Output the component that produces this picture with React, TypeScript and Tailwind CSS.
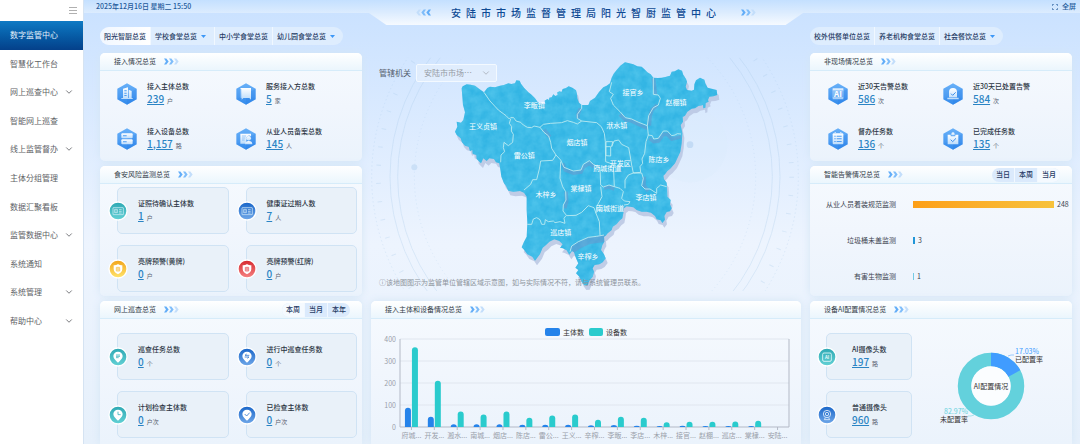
import React from "react";
import { ChevronDown } from "lucide-react";

type Stat = { label: string; value: string; unit: string; icon: React.ReactNode };

const menu: { text: string; more?: boolean; active?: boolean }[] = [
  { text: "数字监管中心", active: true },
  { text: "智慧化工作台" },
  { text: "网上巡查中心", more: true },
  { text: "智能网上巡查" },
  { text: "线上监管督办", more: true },
  { text: "主体分组管理" },
  { text: "数据汇聚看板" },
  { text: "监管数据中心", more: true },
  { text: "系统通知" },
  { text: "系统管理", more: true },
  { text: "帮助中心", more: true },
];

function Arrows({ flip = false }: { flip?: boolean }) {
  return (
    <svg viewBox="0 0 45 20" className={flip ? "h-[7px] w-[15px] rotate-180" : "h-[7px] w-[15px]"} aria-hidden="true">
      <path d="M0 1h7l7 9-7 9H0l6-9z" fill="#62adf8" />
      <path d="M15 1h7l7 9-7 9h-7l6-9z" fill="#7fbdfa" />
      <path d="M30 1h7l7 9-7 9h-7l6-9z" fill="#c3defb" />
    </svg>
  );
}

function Pills({ items }: { items: { text: string; more?: boolean; active?: boolean }[] }) {
  return (
    <nav className="flex h-[18px] w-fit shrink-0 divide-x divide-[#f1f8ff] overflow-hidden rounded-full bg-[#deedfe]">
      {items.map((i) => (
        <button
          key={i.text}
          type="button"
          className={
            "flex items-center gap-1 whitespace-nowrap px-1 text-[7px] font-medium text-[#1f3a63] " +
            (i.active ? "bg-gradient-to-r from-[#f1f7ff] to-white" : "")
          }
        >
          {i.text}
          {i.more && (
            <svg viewBox="0 0 10 6" className="mr-1 h-[3px] w-[5px] shrink-0" aria-hidden="true">
              <path d="M0 0h10L5 6z" fill="#3d98f7" />
            </svg>
          )}
        </button>
      ))}
    </nav>
  );
}

function Segments({ items, active }: { items: string[]; active: number }) {
  return (
    <div className="ml-auto flex h-[14px] divide-x divide-[#f1f8ff] overflow-hidden rounded-full bg-[#dbeafc]">
      {items.map((t, n) => (
        <button
          key={t}
          type="button"
          className={"flex items-center px-1 text-[7px] font-medium text-[#1f3a63] " + (n === active ? "bg-[#f5faff]" : "")}
        >
          {t}
        </button>
      ))}
    </div>
  );
}

function Panel({
  title,
  extra,
  className = "",
  children,
}: {
  title: string;
  extra?: React.ReactNode;
  className?: string;
  children: React.ReactNode;
}) {
  return (
    <section
      className={
        "flex flex-col overflow-hidden bg-gradient-to-b from-[#f6fafe] via-[#f1f6fd] to-[#ebf3fc] shadow-[0_0_8px_#d3e5f5] " + className
      }
    >
      <header className="flex h-[18px] shrink-0 items-center gap-2 border-b border-[#d6ecfa] bg-gradient-to-b from-white to-[#ebf6fd] pl-[14px] pr-3">
        <h2 className="text-[7px] text-[#333c48]">{title}</h2>
        <Arrows />
        {extra}
      </header>
      {children}
    </section>
  );
}

function Value({ label, value, unit }: Omit<Stat, "icon">) {
  return (
    <div>
      <div className="whitespace-nowrap text-[7px] font-medium leading-[12px] text-[#2b3543]">{label}</div>
      <div className="flex items-baseline gap-[3px] leading-[14px]">
        <a href="#" className="text-[10px] font-medium text-[#2b84c4] underline underline-offset-1">
          {value}
        </a>
        <span className="text-[6px] text-[#596270]">{unit}</span>
      </div>
    </div>
  );
}

function Hex({ children }: { children: React.ReactNode }) {
  return (
    <svg viewBox="0 0 60 66" className="h-[22px] w-5 shrink-0" aria-hidden="true">
      <defs>
        <linearGradient id="hexFill" x1="0" y1="0" x2="0" y2="1">
          <stop offset="0" stopColor="#68b0f8" />
          <stop offset="1" stopColor="#3a8fee" />
        </linearGradient>
        <linearGradient id="glyphFill" x1="0" y1="0" x2="0" y2="1">
          <stop offset="0" stopColor="#ffffff" />
          <stop offset="1" stopColor="#bcdcfb" />
        </linearGradient>
      </defs>
      <path d="M30 1 59 17v32L30 65 1 49V17z" fill="url(#hexFill)" />
      <path d="M30 33 59 17v32L30 65z" fill="#1f78e2" opacity=".22" />
      <path d="M30 33 1 49l29 16 29-16z" fill="#2b82ea" opacity=".22" />
      <g fill="url(#glyphFill)">{children}</g>
    </svg>
  );
}

const accessStats: Stat[] = [
  {
    label: "接入主体总数",
    value: "239",
    unit: "户",
    icon: (
      <Hex>
        <path d="M18 17l15-4v34H18zM35 20l9 4v23h-9zM13 45h34v3H13z" />
        <path d="M22 22h7v3h-7zM22 29h7v3h-7zM22 36h7v3h-7z" fill="#4d9df2" />
      </Hex>
    ),
  },
  {
    label: "服务接入方总数",
    value: "5",
    unit: "家",
    icon: (
      <Hex>
        <path d="M14 15h31v3H14zM17 18h28v32l-5-5H22l-5 5z" />
        <path d="M14 15h5v30h-5z" opacity=".7" />
      </Hex>
    ),
  },
  {
    label: "接入设备总数",
    value: "1,157",
    unit: "路",
    icon: (
      <Hex>
        <rect x="13" y="16" width="34" height="15" rx="3" />
        <rect x="13" y="34" width="34" height="15" rx="3" />
        <path d="M18 22h11v3H18zM18 40h11v3H18z" fill="#4d9df2" />
      </Hex>
    ),
  },
  {
    label: "从业人员备案总数",
    value: "145",
    unit: "人",
    icon: (
      <Hex>
        <path d="M13 17h32v8a8 8 0 0 0-13 9l-3 13H13z" />
        <circle cx="38" cy="31" r="7" />
        <path d="M27 49c0-7 4-10 11-10s11 3 11 10z" />
        <path d="M18 23h12v2H18zM18 29h10v2H18zM18 35h8v2h-8z" fill="#4d9df2" />
      </Hex>
    ),
  },
];

const offsiteStats: Stat[] = [
  {
    label: "近30天告警总数",
    value: "586",
    unit: "次",
    icon: (
      <Hex>
        <path d="M14 16h32v6H14zM14 43h32v6H14z" opacity=".8" />
        <rect x="13" y="20" width="34" height="25" opacity=".35" />
        <text x="30" y="42" textAnchor="middle" fontSize="24" fontWeight="700" fill="#fff">
          AI
        </text>
      </Hex>
    ),
  },
  {
    label: "近30天已处置告警",
    value: "584",
    unit: "次",
    icon: (
      <Hex>
        <path d="M18 43V27a12 12 0 0 1 24 0v16zM13 44h34v5H13z" />
        <path d="M24 32l5 5 9-9" fill="none" stroke="#3d8fec" strokeWidth="3" />
      </Hex>
    ),
  },
  {
    label: "督办任务数",
    value: "136",
    unit: "个",
    icon: (
      <Hex>
        <rect x="14" y="16" width="32" height="33" rx="3" />
        <path d="M19 23h4v3h-4zM26 23h15v3H26zM19 31h4v3h-4zM26 31h15v3H26zM19 39h4v3h-4zM26 39h15v3H26z" fill="#4d9df2" />
        <path d="M20 12h3v6h-3zM37 12h3v6h-3z" />
      </Hex>
    ),
  },
  {
    label: "已完成任务数",
    value: "135",
    unit: "个",
    icon: (
      <Hex>
        <path d="M14 20h9v5h14v-5h9v29H14z" />
        <path d="M25 22v-4a5 5 0 0 1 10 0v4z" />
        <path d="M23 35l6 6 10-10" fill="none" stroke="#3d8fec" strokeWidth="3" />
      </Hex>
    ),
  },
];

const badgeColors = {
  teal: ["#2fa9b4", "#62d0d4"],
  blue: ["#1b67c9", "#6ea6e8"],
  amber: ["#f2a51c", "#ffe36a"],
  red: ["#d62a30", "#f58080"],
};

function Badge({ tone, children }: { tone: keyof typeof badgeColors; children: React.ReactNode }) {
  const [from, to] = badgeColors[tone];
  return (
    <svg viewBox="0 0 60 60" className="size-5" aria-hidden="true">
      <defs>
        <linearGradient id={"badge-" + tone} x1="0" y1="0" x2="0" y2="1">
          <stop offset="0" stopColor={from} />
          <stop offset="1" stopColor={to} />
        </linearGradient>
      </defs>
      <circle cx="30" cy="30" r="29" fill="#fff" />
      <circle cx="30" cy="30" r="25" fill={"url(#badge-" + tone + ")"} />
      {children}
    </svg>
  );
}

const IdCard = () => (
  <g fill="none" stroke="#dff3fa" strokeWidth="2">
    <rect x="15" y="20" width="31" height="21" rx="1" />
    <path d="M20 25h8v10h-8zM33 26h8M33 31h8M33 36h8M24 28v4" />
  </g>
);
const Shield = ({ color }: { color: string }) => (
  <g>
    <path d="M30 15c4 3 9 4 13 4v11c0 8-6 12-13 16-7-4-13-8-13-16V19c4 0 9-1 13-4z" fill="#fff" />
    <path d="M25 25h10v11H25zM25 30h10M30 25v11" fill="none" stroke={color} strokeWidth="2" />
  </g>
);
const Pin = ({ color, d }: { color: string; d: string }) => (
  <g>
    <path d="M30 14c8 0 14 6 14 13 0 8-8 14-14 20-6-6-14-12-14-20 0-7 6-13 14-13z" fill="#fff" />
    <path d={d} fill="none" stroke={color} strokeWidth="2.5" />
  </g>
);

function Card({ label, value, unit, icon, pad = "pl-5" }: Stat & { pad?: string }) {
  return (
    <div className={"relative flex h-[47px] rounded-[5px] border border-[#d0e3f4] bg-[#e9f1f9] pt-[9px] " + pad}>
      <div className="absolute -left-[10px] top-[13px]">{icon}</div>
      <Value label={label} value={value} unit={unit} />
    </div>
  );
}

const riskCards: Stat[] = [
  { label: "证照待确认主体数", value: "1", unit: "户", icon: <Badge tone="teal"><IdCard /></Badge> },
  { label: "健康证过期人数", value: "7", unit: "人", icon: <Badge tone="blue"><IdCard /></Badge> },
  { label: "亮牌预警(黄牌)", value: "0", unit: "户", icon: <Badge tone="amber"><Shield color="#f5bb3a" /></Badge> },
  { label: "亮牌预警(红牌)", value: "0", unit: "户", icon: <Badge tone="red"><Shield color="#e24a4e" /></Badge> },
];

const patrolCards: Stat[] = [
  { label: "巡查任务总数", value: "0", unit: "个", icon: <Badge tone="teal"><Pin color="#3db5be" d="M24 24h12M24 28h12M24 32h8" /></Badge> },
  { label: "进行中巡查任务数", value: "0", unit: "个", icon: <Badge tone="blue"><Pin color="#3579d0" d="M37 25H24l5-4M23 30h13l-5 4" /></Badge> },
  { label: "计划检查主体数", value: "0", unit: "户次", icon: <Badge tone="teal"><Pin color="#3db5be" d="M30 20v9h8" /></Badge> },
  { label: "已检查主体数", value: "0", unit: "户次", icon: <Badge tone="blue"><Pin color="#3579d0" d="M23 27l6 6 9-10" /></Badge> },
];

const cameraCards: Stat[] = [
  {
    label: "AI摄像头数",
    value: "197",
    unit: "路",
    icon: (
      <Badge tone="teal">
        <rect x="17" y="18" width="26" height="25" rx="4" fill="none" stroke="#e5f9fa" strokeWidth="2.5" />
        <text x="30" y="35" textAnchor="middle" fontSize="13" fontWeight="700" fill="#e5f9fa">
          AI
        </text>
      </Badge>
    ),
  },
  {
    label: "普通摄像头",
    value: "960",
    unit: "路",
    icon: (
      <Badge tone="blue">
        <g fill="none" stroke="#e6f1fd" strokeWidth="2.5">
          <circle cx="30" cy="27" r="11" />
          <circle cx="30" cy="27" r="5" />
          <path d="M25 38l-3 6h16l-3-6" />
        </g>
      </Badge>
    ),
  },
];

const outline =
  "M65 100 68 94 80 88 92 89 105 92 118 102 132 112 142 99 150 95 165 97 180 92 192 90 205 85 214 87 225 85 229 76 239 77 243 86 252 98 265 112 273 118 285 130 293 141 303 146 316 147 314 137 322 132 327 135 328 128 335 127 340 118 346 123 353 120 352 112 360 109 364 112 368 102 378 99 386 94 397 98 408 106 411 118 412 130 417 143 425 150 445 150 450 138 465 128 477 111 490 97 500 92 510 85 515 68 521 56 530 45 541 32 555 22 568 25 580 28 592 34 605 35 615 44 622 52 632 58 640 68 654 69 665 68 676 66 690 62 695 50 704 49 715 43 726 47 730 60 738 72 741 80 737 95 741 105 755 107 762 104 763 88 768 76 780 68 793 74 797 88 803 98 818 102 830 105 832 120 820 124 808 125 804 135 806 140 797 144 796 158 790 160 789 150 775 153 765 160 755 161 742 170 735 182 728 186 729 200 722 210 727 235 725 265 721 290 712 310 705 325 692 340 682 348 675 358 670 362 672 373 680 383 681 395 682 425 692 435 690 448 695 460 690 469 680 471 673 483 675 494 667 504 662 496 650 493 645 483 633 473 620 470 605 470 590 465 580 457 570 455 560 454 552 460 550 475 547 490 538 497 530 507 518 515 515 525 503 535 497 542 492 545 493 560 487 570 483 585 492 598 497 610 488 622 478 628 464 630 458 640 462 650 458 665 449 676 443 690 433 691 425 680 418 665 408 655 415 645 406 638 415 625 408 610 402 592 396 588 388 599 380 586 368 580 360 578 368 568 358 558 343 553 328 560 318 570 308 578 300 597 285 617 277 605 262 598 252 584 245 577 252 560 260 545 262 505 260 465 260 425 252 413 240 408 220 410 205 407 198 392 192 385 184 365 182 350 178 325 168 322 162 312 148 310 140 318 130 310 123 325 116 318 110 312 109 300 98 296 97 285 90 288 86 275 75 272 66 262 62 250 50 240 45 230 52 215 50 200 63 203 70 195 75 172 69 150 67 125Z";

const borders = [
  "M132 112 150 138 175 165 198 182 208 192 212 188 221 188 228 198 242 202 250 210 262 217 275 218 282 213 300 217 310 208 332 205 365 203 382 197 400 202 412 207 425 198",
  "M212 192 208 205 215 215 214 228 220 238 218 262 205 272 192 262 190 278 194 290 183 300 182 322",
  "M300 217 312 232 326 243 332 262 335 280 348 300 338 316 302 318 298 342 290 374 278 374 272 388 252 405",
  "M425 150 425 160 412 178 412 190 425 198 470 203 484 215 493 235 496 260 497 320",
  "M515 82 508 110 520 118 512 130 520 150 540 170 556 188 575 192 596 202 622 212",
  "M640 68 640 118 655 120 661 130 655 150 640 158 626 182 622 212 625 240",
  "M625 240 637 242 641 252 655 250 670 228 682 228 695 242 705 240 712 236 723 237",
  "M625 240 618 260 614 295 606 312 608 325 600 335 602 352 580 354 575 330 570 300 566 278 545 268 536 255 522 258 515 275 518 260 498 260 498 302 512 303 512 275 498 275",
  "M497 320 520 328 523 395 540 400 550 410 545 430 553 438 570 440 565 448 552 450",
  "M348 300 362 315 372 337 400 348 423 345 430 328 448 317 460 328 480 338 482 390 490 396 507 390 523 395",
  "M362 320 360 370 368 395 377 410 378 435 370 450 369 468 380 482 408 481 425 472 445 452 462 458 468 475 478 500 480 540",
  "M482 395 486 425 470 455 468 475",
  "M555 400 555 375 565 360 580 354 605 354 610 370 605 392 615 402 630 402 650 415 650 400 662 390 680 395",
  "M262 508 275 508 280 492 290 488 300 494 305 508 314 508 316 494 325 500 340 498 345 503 360 500 375 505 372 490 378 482",
  "M390 590 395 573 415 560 445 547 470 544 492 540",
];

const towns: [string, number, number][] = [
  ["接官乡", 804, 149], ["赵棚镇", 933, 181], ["李畈镇", 508, 188], ["王义贞镇", 354, 251], ["洑水镇", 755, 249],
  ["烟店镇", 636, 301], ["雷公镇", 478, 340], ["开发区", 766, 362], ["府城街道", 727, 378], ["陈店乡", 882, 351],
  ["棠棣镇", 648, 437], ["木梓乡", 543, 455], ["李店镇", 843, 464], ["南城街道", 735, 497], ["巡店镇", 587, 569],
  ["辛榨乡", 669, 642],
];

function RegionMap() {
  return (
    <svg viewBox="18 -96 1290 849" className="absolute inset-0 size-full" role="img" aria-label="辖区地图">
      <defs>
        <filter id="terrain" x="0" y="0" width="1" height="1">
          <feTurbulence type="fractalNoise" baseFrequency="0.04" numOctaves="3" seed="4" />
          <feColorMatrix values="0 0 0 0 0.12  0 0 0 0 0.62  0 0 0 0 0.88  0.9 0 0 0 -0.2" />
          <feComposite in2="SourceGraphic" operator="in" />
        </filter>
        <clipPath id="ringClip">
          <rect x="18" y="38" width="1290" height="700" />
        </clipPath>
        <clipPath id="landClip">
          <path d={outline} />
        </clipPath>
      </defs>
      <g clipPath="url(#ringClip)" fill="none" stroke="#a9cbe9" strokeWidth="3" opacity=".3">
        <circle cx="660" cy="395" r="585" />
        <circle cx="660" cy="395" r="562" />
        <circle cx="660" cy="395" r="512" strokeDasharray="3 9" />
        <circle cx="660" cy="395" r="640" strokeDasharray="4 8" />
        <circle cx="660" cy="395" r="620" strokeWidth="14" strokeDasharray="3 52" />
      </g>
      <circle cx="975" cy="300" r="112" fill="#dcebfb" opacity=".3" />
      <circle cx="148" cy="367" r="9" fill="#cbe0f7" />
      <circle cx="975" cy="299" r="10" fill="#c3dbf5" />
      <g transform="translate(225 30)">
        <path d={outline} fill="#b9c5e2" transform="translate(6 14)" opacity=".85" />
        <path d={outline} fill="#33b5e4" />
        <path d={outline} fill="#fff" filter="url(#terrain)" />
        <g clipPath="url(#landClip)" fill="none" stroke="#7391c8" strokeWidth="11" opacity=".45">
          <path d="M540 178 556 194 575 198 596 208 622 220M640 70 646 118M652 150 636 164 630 184 628 212M628 250 641 260 655 258 670 238 682 238 695 252 723 245" />
          <path d="M368 325 376 345 400 354 423 351 430 336 448 325 462 336M312 224 330 246M421 160 414 178 414 190M492 400 507 396 523 402M612 365 612 392 625 408M378 410 380 440 374 460" />
          <path d="M395 586 415 572 445 558 470 554 496 550" strokeWidth="20" />
        </g>
        <g fill="none" stroke="#c4eef2" strokeWidth="2.5" strokeLinejoin="round">
          {borders.map((d) => (
            <path key={d} d={d} />
          ))}
        </g>
      </g>
      <g fill="#fff" fontSize="21" textAnchor="middle">
        {towns.map(([name, x, y]) => (
          <text key={name} x={x} y={y}>
            {name}
          </text>
        ))}
      </g>
    </svg>
  );
}

const chart: [string, number, number][] = [
  ["府城...", 87, 363], ["开发...", 47, 210], ["溵水...", 13, 70], ["南城...", 13, 57], ["烟店...", 13, 70], ["陈店...", 10, 42],
  ["雷公...", 10, 52], ["王义...", 10, 57], ["辛榨...", 8, 33], ["李畈...", 9, 47], ["李店...", 6, 42], ["木梓...", 5, 22],
  ["接官...", 6, 24], ["赵棚...", 4, 24], ["巡店...", 5, 25], ["棠棣...", 5, 28], ["安陆...", 0, 0],
];

function bar(x: number, value: number) {
  const h = (value / 400) * 88;
  const r = Math.min(3, h);
  return `M${x} 108v${-(h - r)}a3 ${r} 0 0 1 6 0v${h - r}z`;
}

function BarChart() {
  const step = 389 / chart.length;
  return (
    <svg viewBox="0 0 430 125" className="w-full" role="img" aria-label="接入主体和设备情况">
      <rect x="174" y="9" width="15" height="8" rx="2" fill="#2583ea" />
      <rect x="218" y="9" width="14" height="8" rx="2" fill="#2acbcd" />
      <g fontSize="7" fill="#333">
        <text x="192" y="16">主体数</text>
        <text x="235" y="16">设备数</text>
      </g>
      <g fontSize="7" fill="#9aa0aa" textAnchor="end">
        {[0, 100, 200, 300, 400].map((v) => (
          <text key={v} x="25" y={111 - v * 0.22}>
            {v}
          </text>
        ))}
      </g>
      <path d="M29 20h389M29 42h389M29 64h389M29 86h389" stroke="#e0e6ef" />
      <path d="M29 20v88h389V20" fill="none" stroke="#b3b9c6" />
      {chart.map(([name, a, b], n) => {
        const c = 29 + step * (n + 0.5);
        return (
          <g key={name}>
            <path d={`M${c} 108v3`} stroke="#b3b9c6" />
            {a > 0 && <path d={bar(c - 6.5, a)} fill="#2583ea" />}
            {b > 0 && <path d={bar(c + 0.5, b)} fill="#2acbcd" />}
            <text x={c} y="119" fontSize="7" fill="#9aa0aa" textAnchor="middle">
              {name}
            </text>
          </g>
        );
      })}
    </svg>
  );
}

const alerts = [
  { name: "从业人员着装规范监测", value: 248, color: "bg-gradient-to-r from-[#fd9f17] to-[#f7c23c]", width: 141 },
  { name: "垃圾桶未盖监测", value: 3, color: "bg-[#2196d8]", width: 2 },
  { name: "有害生物监测", value: 1, color: "bg-[#74cbe4]", width: 1 },
];

function Donut() {
  const len = 2 * Math.PI * 26.5;
  return (
    <svg viewBox="0 0 150 125" className="h-[125px] w-[150px]" role="img" aria-label="AI配置情况">
      <g fill="none" strokeWidth="13.5" transform="rotate(-90 69 67)">
        <circle cx="69" cy="67" r="26.5" stroke="#63d1dc" />
        <circle cx="69" cy="67" r="26.5" stroke="#409cff" strokeDasharray={`${len * 0.1703} ${len}`} />
      </g>
      <circle cx="69" cy="67" r="19.5" fill="#fbfdff" />
      <path d="M86 37l3-1h3" fill="none" stroke="#409cff" strokeWidth=".5" />
      <path d="M52 96l-3 1h-3" fill="none" stroke="#63d1dc" strokeWidth=".5" />
      <g fontSize="7" fill="#333">
        <text x="69" y="70" textAnchor="middle">AI配置情况</text>
        <text x="93" y="35" fill="#409cff">17.03%</text>
        <text x="93" y="43">已配置率</text>
        <text x="46" y="95" fill="#63d1dc" textAnchor="end">82.97%</text>
        <text x="46" y="103" textAnchor="end">未配置率</text>
      </g>
    </svg>
  );
}

export default function App() {
  return (
    <div
      lang="zh-CN"
      className="flex h-screen overflow-hidden bg-white font-['Noto_Sans_CJK_SC','Noto_Sans',sans-serif] leading-none"
    >
      <aside className="w-[84px] shrink-0 border-r border-[#d5e3f2] bg-white">
        <div className="flex h-[21px] items-center justify-end pr-[6px]">
          <button type="button" aria-label="收起菜单" className="flex w-2 flex-col gap-[2px]">
            <span className="h-px bg-[#b0b0b0]" />
            <span className="h-px bg-[#b0b0b0]" />
            <span className="h-px bg-[#b0b0b0]" />
          </button>
        </div>
        <nav className="grid h-[314px] auto-rows-fr">
          {menu.map((m) => (
            <a
              key={m.text}
              href="#"
              className={
                "flex items-center justify-between pl-[10px] pr-[9px] text-[8px] " +
                (m.active ? "bg-gradient-to-b from-[#0f7ac4] to-[#04408a] text-[#e3f0fb]" : "text-[#606266]")
              }
            >
              {m.text}
              {m.more && <ChevronDown className="size-[10px] text-[#606266]" />}
            </a>
          ))}
        </nav>
      </aside>

      <div className="flex min-w-0 flex-1 flex-col bg-gradient-to-b from-[#c9e1ff] via-[#edf4fe] via-55% to-[#e6f0fb]">
        <header className="relative z-10 flex h-[13px] shrink-0 items-center justify-between bg-gradient-to-b from-[#c4e0ff] to-[#dcecfe] pl-3 pr-1 text-[7px] font-medium text-[#235a9b]">
          <time>2025年12月16日 星期二 15:50</time>
          <div className="absolute inset-x-0 top-0 flex justify-center pl-4 pr-2">
            <div className="flex h-[25px] w-[434px] items-center justify-center gap-5 bg-gradient-to-b from-[#c4e0ff] via-[#dcecfe] to-[#f6faff] [clip-path:polygon(0_0,100%_0,100%_52%,96%_100%,4%_100%,0_52%)]">
              <Arrows flip />
              <h1 className="whitespace-nowrap text-[10px] font-medium tracking-[5px] text-[#0e4a94]">安陆市市场监督管理局阳光智厨监管中心</h1>
              <Arrows />
            </div>
          </div>
          <button type="button" className="flex items-center gap-1">
            <svg viewBox="0 0 18 18" className="size-[6px]" fill="none" stroke="#235a9b" strokeWidth="2" aria-hidden="true">
              <path d="M1 6V1h5M12 1h5v5M17 12v5h-5M6 17H1v-5" />
            </svg>
            全屏
          </button>
        </header>

        <main className="grid min-h-0 flex-1 grid-cols-[262fr_430fr_262fr] gap-[9px] pl-4 pr-2">
          <div className="flex min-h-0 min-w-0 flex-col pt-[14px]">
            <Pills
              items={[
                { text: "阳光智厨总览", active: true },
                { text: "学校食堂总览", more: true },
                { text: "中小学食堂总览" },
                { text: "幼儿园食堂总览", more: true },
              ]}
            />
            <div className="mt-2 flex min-h-0 flex-1 flex-col gap-[5px]">
              <Panel title="接入情况总览" className="h-[108px] shrink-0 rounded-[5px]">
                <div className="grid flex-1 grid-cols-2 grid-rows-2 pl-[17px] pr-[7px]">
                  {accessStats.map((s) => (
                    <div key={s.label} className="flex items-center gap-[10px]">
                      {s.icon}
                      <Value label={s.label} value={s.value} unit={s.unit} />
                    </div>
                  ))}
                </div>
              </Panel>
              <Panel title="食安风险监测总览" className="h-[130px] shrink-0 rounded-[5px]">
                <div className="grid grid-cols-2 gap-x-[17px] gap-y-[11px] pl-[17px] pr-[5px] pt-[3px]">
                  {riskCards.map((s) => (
                    <Card key={s.label} {...s} />
                  ))}
                </div>
              </Panel>
              <Panel
                title="网上巡查总览"
                className="min-h-0 flex-1 rounded-t-[5px]"
                extra={<Segments items={["本周", "当月", "本年"]} active={0} />}
              >
                <div className="grid grid-cols-2 gap-x-[17px] gap-y-[11px] pl-[17px] pr-[5px] pt-[14px]">
                  {patrolCards.map((s) => (
                    <Card key={s.label} {...s} />
                  ))}
                </div>
              </Panel>
            </div>
          </div>

          <div className="flex min-h-0 min-w-0 flex-col gap-[5px]">
            <div className="relative flex h-[283px] shrink-0 flex-col justify-between px-2 pb-[10px] pt-[51px]">
              <RegionMap />
              <div className="relative flex items-center gap-[5px]">
                <label htmlFor="office" className="text-[8px] text-[#55606e]">
                  管辖机关
                </label>
                <div className="relative flex">
                  <select
                    id="office"
                    className="h-[18px] w-[81px] appearance-none rounded-[2px] border border-[#f3f9ff] bg-[#e3effd]/80 pl-[7px] text-[8px] text-[#969ca5]"
                  >
                    <option>安陆市市场⋯</option>
                  </select>
                  <ChevronDown className="pointer-events-none absolute right-[6px] top-1 size-[10px] text-[#a8afb9]" />
                </div>
              </div>
              <p className="relative whitespace-nowrap text-[7px] text-[#8d939c]">
                ⓘ该地图图示为监管单位管辖区域示意图，如与实际情况不符，请与系统管理员联系。
              </p>
            </div>
            <Panel title="接入主体和设备情况总览" className="min-h-0 flex-1 rounded-t-[5px]">
              <BarChart />
            </Panel>
          </div>

          <div className="flex min-h-0 min-w-0 flex-col pt-[14px]">
            <Pills
              items={[{ text: "校外供餐单位总览" }, { text: "养老机构食堂总览" }, { text: "社会餐饮总览", more: true }]}
            />
            <div className="mt-2 flex min-h-0 flex-1 flex-col gap-[5px]">
              <Panel title="非现场情况总览" className="h-[108px] shrink-0 rounded-[5px]">
                <div className="grid flex-1 grid-cols-2 grid-rows-2 pl-[18px] pr-[14px]">
                  {offsiteStats.map((s) => (
                    <div key={s.label} className="flex items-center gap-[10px]">
                      {s.icon}
                      <Value label={s.label} value={s.value} unit={s.unit} />
                    </div>
                  ))}
                </div>
              </Panel>
              <Panel
                title="智能告警情况总览"
                className="h-[130px] shrink-0 rounded-[5px]"
                extra={<Segments items={["当日", "本周", "当月"]} active={2} />}
              >
                <ul className="flex flex-col pt-[2px] text-[7px] text-[#3c4450]">
                  {alerts.map((a) => (
                    <li key={a.name} className="flex h-9 items-center">
                      <span className="w-[86px] shrink-0 whitespace-nowrap text-right">{a.name}</span>
                      <span className={"ml-[17px] mr-[3px] h-[7px] shrink-0 " + a.color} style={{ width: a.width }} />
                      <span>{a.value}</span>
                    </li>
                  ))}
                </ul>
              </Panel>
              <Panel title="设备AI配置情况总览" className="min-h-0 flex-1 rounded-t-[5px]">
                <div className="flex justify-between pl-4">
                  <div className="flex w-[86px] flex-col gap-[11px] pt-[14px]">
                    {cameraCards.map((s) => (
                      <Card key={s.label} {...s} pad="pl-[25px]" />
                    ))}
                  </div>
                  <Donut />
                </div>
              </Panel>
            </div>
          </div>
        </main>
      </div>
    </div>
  );
}
